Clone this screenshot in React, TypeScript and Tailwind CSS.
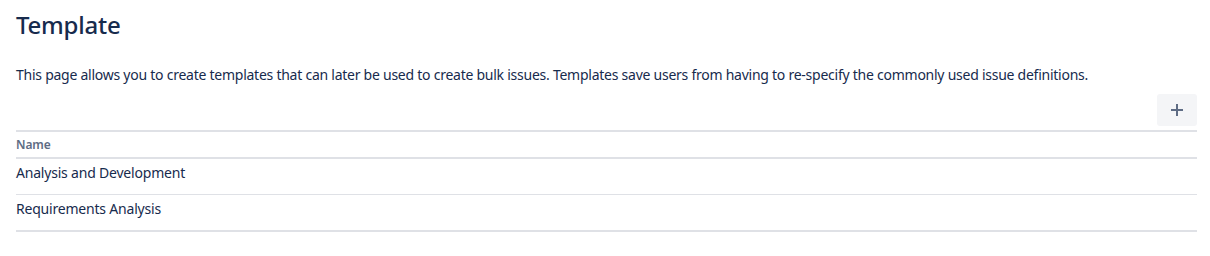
import React from "react";

export default function App() {
  return (
    <div className="w-[1210px] h-[256px] bg-white pl-4 pt-[9px] text-[#172B4D]" style={{ fontFamily: '"Noto Sans", "Open Sans", sans-serif' }}>
      <div className="w-[1181px]">
        <h1 className="text-[24px] leading-[32px] font-medium tracking-[-0.01em]">Template</h1>
        <p className="mt-[24px] text-[14px] leading-[20px] tracking-[-0.25px]">
          This page allows you to create templates that can later be used to create bulk issues. Templates save users from having to re-specify the commonly used issue definitions.
        </p>
        <div className="flex justify-end mt-[9px] mb-[4px]">
          <button className="w-[40px] h-[32px] rounded-[3px] bg-[#F4F5F7] flex items-center justify-center">
            <svg width="16" height="16" viewBox="0 0 16 16" fill="none">
              <path d="M8 2v12M2 8h12" stroke="#5E6C84" strokeWidth="2" />
            </svg>
          </button>
        </div>
        <div className="border-t-2 border-b-2 border-[#DFE1E6] h-[29px] flex items-center text-[12px] font-semibold text-[#5E6C84] tracking-[-0.1px]">
          Name
        </div>
        <div className="border-b border-[#DFE1E6] h-[36px] pt-[4px] text-[14px] leading-[20px] tracking-[-0.2px]">
          Analysis and Development
        </div>
        <div className="border-b-2 border-[#DFE1E6] h-[37px] pt-[4px] text-[14px] leading-[20px] tracking-[-0.2px]">
          Requirements Analysis
        </div>
      </div>
    </div>
  );
}
